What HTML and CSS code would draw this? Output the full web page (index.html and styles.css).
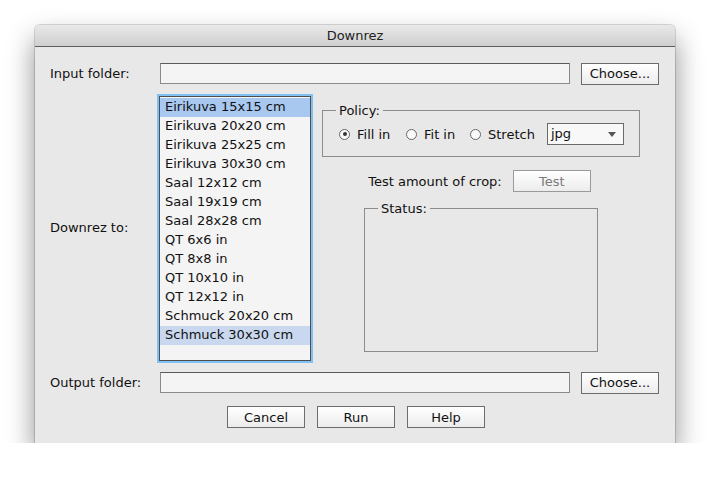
FILE: index.html
```html
<!DOCTYPE html>
<html>
<head>
<meta charset="utf-8">
<link rel="stylesheet" href="styles.css">
</head>
<body>
<div class="window">
  <div class="titlebar">Downrez</div>
  <div class="content">
    <div class="row">
      <label class="label">Input folder:</label>
      <div class="field"></div>
      <button class="btn choose">Choose...</button>
    </div>
    <div class="middle">
      <label class="label">Downrez to:</label>
      <div class="list">
        <div class="item sel">Eirikuva 15x15 cm</div>
        <div class="item">Eirikuva 20x20 cm</div>
        <div class="item">Eirikuva 25x25 cm</div>
        <div class="item">Eirikuva 30x30 cm</div>
        <div class="item">Saal 12x12 cm</div>
        <div class="item">Saal 19x19 cm</div>
        <div class="item">Saal 28x28 cm</div>
        <div class="item">QT 6x6 in</div>
        <div class="item">QT 8x8 in</div>
        <div class="item">QT 10x10 in</div>
        <div class="item">QT 12x12 in</div>
        <div class="item">Schmuck 20x20 cm</div>
        <div class="item sel2">Schmuck 30x30 cm</div>
      </div>
      <div class="right">
        <fieldset class="group policy">
          <legend>Policy:</legend>
          <div class="radios">
            <span class="radio r-fill"><span class="circle on"></span>Fill in</span>
            <span class="radio r-fit"><span class="circle"></span>Fit in</span>
            <span class="radio r-stretch"><span class="circle"></span>Stretch</span>
            <span class="combo">jpg<span class="arrow"></span></span>
          </div>
        </fieldset>
        <div class="testrow">
          <span>Test amount of crop:</span>
          <button class="btn test">Test</button>
        </div>
        <fieldset class="group status">
          <legend>Status:</legend>
        </fieldset>
      </div>
    </div>
    <div class="row out">
      <label class="label">Output folder:</label>
      <div class="field"></div>
      <button class="btn choose">Choose...</button>
    </div>
    <div class="buttons">
      <button class="btn">Cancel</button>
      <button class="btn">Run</button>
      <button class="btn">Help</button>
    </div>
  </div>
</div>
</body>
</html>
```

FILE: styles.css
```css
html, body {
  margin: 0;
  padding: 0;
  background: #ffffff;
}
body {
  font-family: "DejaVu Sans", "Liberation Sans", sans-serif;
  font-size: 13px;
  color: #111;
}
.window {
  margin: 25px 0 0 35px;
  width: 640px;
  height: 418px;
  background: #e8e8e8;
  border-radius: 5px 5px 0 0;
  box-shadow: 0 14px 28px rgba(0,0,0,0.45), 0 0 0 1px rgba(0,0,0,0.14);
  display: flex;
  flex-direction: column;
  overflow: hidden;
}
.titlebar {
  height: 21px;
  line-height: 22px;
  text-align: center;
  background: linear-gradient(#e9e9e9, #cfcfcf);
  border-bottom: 1px solid #5e5e5e;
  color: #222;
  font-size: 13px;
}
.content {
  padding: 16px 16px 0 15px;
  display: flex;
  flex-direction: column;
}
.row {
  display: flex;
  align-items: center;
  height: 21px;
}
.row.out {
  margin-top: 11px;
}
.label {
  width: 110px;
  flex: none;
}
.field {
  width: 408px;
  height: 19px;
  background: #f4f4f4;
  border: 1px solid #8a8a8a;
  border-top-color: #5a5a5a;
  margin-right: 11px;
}
.btn {
  font-family: inherit;
  font-size: 13px;
  color: #111;
  width: 78px;
  height: 22px;
  padding: 0;
  border: 1px solid #6c6c6c;
  background: linear-gradient(#ffffff, #ececec);
  border-radius: 0;
}
.middle {
  display: flex;
  align-items: center;
  margin-top: 10px;
  height: 267px;
}
.middle > .label {
  width: 109px;
}
.list {
  align-self: flex-start;
  width: 150px;
  height: 262px;
  margin-top: 2px;
  background: #f4f4f4;
  border: 1px solid #4e4e4e;
  box-shadow: 0 0 0 2px #80c0f2;
  padding-top: 1px;
}
.item {
  height: 19px;
  line-height: 18px;
  padding-left: 5px;
  white-space: nowrap;
}
.item.sel { background: #a8c8f0; }
.item.sel2 { background: #c9d8ee; }
.right {
  align-self: flex-start;
  margin-left: 11px;
  width: 318px;
  display: flex;
  flex-direction: column;
  align-items: center;
}
.group {
  margin: 0;
  border: 1px solid #8c8c8c;
  box-sizing: border-box;
  padding: 0;
}
.group legend {
  padding: 0 3px;
  margin-left: 13px;
  line-height: 13px;
}
.policy {
  width: 318px;
  height: 53px;
  margin-top: 10px;
}
.radios {
  display: flex;
  align-items: center;
  padding-left: 16px;
  margin-top: 6px;
}
.radio {
  display: flex;
  align-items: center;
  flex: none;
}
.r-fill { width: 67px; }
.r-fit { width: 64px; }
.r-stretch { width: 77px; }
.circle {
  width: 11px;
  height: 11px;
  border: 1px solid #666;
  border-radius: 50%;
  background: #fafafa;
  margin-right: 7px;
  position: relative;
  box-sizing: border-box;
}
.circle.on::after {
  content: "";
  position: absolute;
  left: 2.5px;
  top: 2.5px;
  width: 4px;
  height: 4px;
  border-radius: 50%;
  background: #333;
}
.combo {
  width: 72px;
  height: 20px;
  line-height: 19px;
  border: 1px solid #6a6a6a;
  background: #f8f8f8;
  padding-left: 3px;
  position: relative;
}
.arrow {
  position: absolute;
  right: 7px;
  top: 8px;
  border-left: 4px solid transparent;
  border-right: 4px solid transparent;
  border-top: 5px solid #555;
}
.testrow {
  display: flex;
  align-items: center;
  margin-top: 13px;
  margin-left: -3px;
}
.testrow span {
  margin-right: 11px;
}
.btn.test {
  color: #7a7a7a;
  border-color: #9a9a9a;
  height: 22px;
}
.status {
  width: 234px;
  height: 150px;
  margin-top: 10px;
}
.buttons {
  display: flex;
  justify-content: center;
  gap: 12px;
  margin-top: 13px;
  margin-left: 3px;
}
```
